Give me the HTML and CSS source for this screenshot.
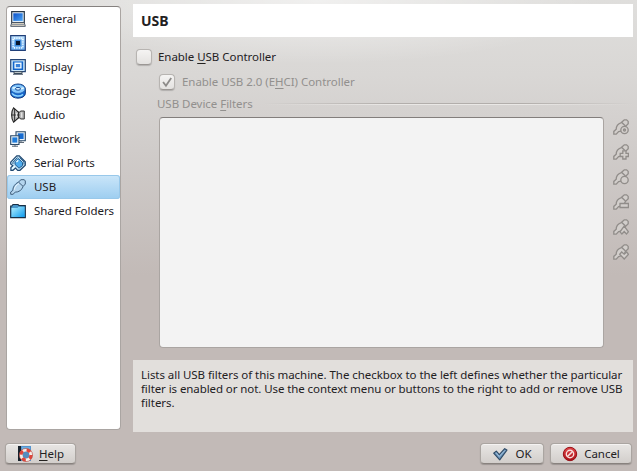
FILE: index.html
```html
<!DOCTYPE html>
<html lang="en">
<head>
<meta charset="utf-8">
<title>Settings - USB</title>
<link rel="stylesheet" href="styles.css">
</head>
<body>
<svg class="defs" aria-hidden="true">
  <defs>
    <linearGradient id="screen" x1="0" y1="0" x2="1" y2="1"><stop offset="0" stop-color="#0b50c8"/><stop offset="1" stop-color="#4ba5f5"/></linearGradient>
    <linearGradient id="pale" x1="0" y1="0" x2="0" y2="1"><stop offset="0" stop-color="#bfe3ff"/><stop offset="1" stop-color="#69adf0"/></linearGradient>
    <linearGradient id="folder" x1="0" y1="0" x2="1" y2="1"><stop offset="0" stop-color="#b4f0ff"/><stop offset="1" stop-color="#0c9bee"/></linearGradient>
    <linearGradient id="red" x1="0" y1="0" x2="0" y2="1"><stop offset="0" stop-color="#e2474a"/><stop offset="1" stop-color="#a90f16"/></linearGradient>
    <g id="plug">
      <path d="M.7 15.3V13L2.8 11.4C2.8 8 5 4.6 8.3 3.2L11 .7H14.3L15.3 2V5L13.2 7.4C12 11 8.8 13.2 5.2 13.2L3 15.3Z"/>
      <path d="M8.6 3.2L13 7.3" fill="none"/>
    </g>
    <g id="plug-small">
      <path d="M.8 15.2V12.4L3.2 10.2C3.2 7.2 5.5 4.6 8.3 3.6L11.3.8H13.6L15.2 2.4V4.7L12.6 7.3C11.4 10.3 8.7 12.3 5.6 12.6L3.2 15.2Z"/>
      <path d="M8.8 3.5L12.5 7" fill="none"/>
    </g>
  </defs>
</svg>
<div class="window">
  <div class="content">
    <nav class="sidebar">
      <a class="item"><svg class="icon" viewBox="0 0 16 16"><path d="M1.7.7h12.6v11H1.7z" fill="#e0edf9" stroke="#293847" stroke-width="1.2"/><path d="M3.3 2.3h9.4v7.6H3.3z" fill="url(#screen)"/><path d="M1.7 11.7h12.6l1 3.6H.7z" fill="#f3ead2" stroke="#465365"/><path d="M2 13.6h12" stroke="#89919d"/></svg><span>General</span></a>
      <a class="item"><svg class="icon" viewBox="0 0 16 16"><path d="M.7.7h14.6v14.6H.7z" fill="url(#pale)" stroke="#203f78" stroke-width="1.2"/><path d="M4 3.2h8.5M4 12.8h8.5M3.2 4v8.5M12.8 4v8.5" stroke="#f0faff" stroke-width="1.8" stroke-dasharray="1 1.4"/><path d="M4.7 4.7h6.6v6.6H4.7z" fill="#3b86d6"/><path d="M6 6h4v4H6z" fill="#07152b"/></svg><span>System</span></a>
      <a class="item"><svg class="icon" viewBox="0 0 16 16"><path d="M.7.7h14.6v11.9H.7z" fill="#cbe8fc" stroke="#264574" stroke-width="1.2"/><path d="M2.8 2.4h10.4v8.6H2.8z" fill="#1265cb"/><path d="M5.1 4.2h5.8v4.7H5.1z" fill="#3981d9" stroke="#f0faff" stroke-width="1.4"/><path d="M4 12.7h8v1.8H4z" fill="#dce0de" stroke="#39495a"/><path d="M3 15.3h10" stroke="#536070"/></svg><span>Display</span></a>
      <a class="item"><svg class="icon" viewBox="0 0 16 16"><path d="M.6 6.2C.6-.7 15.4-.7 15.4 6.2v4c0 6.6-14.8 6.6-14.8 0z" fill="#1767cd" stroke="#173c7c"/><ellipse cx="8" cy="5.9" rx="7" ry="4.5" fill="#86c8fc" stroke="#2866b2" stroke-width=".7"/><path d="M2.5 5L7 4.9M9 6.3l4.7-1.3" stroke="#e6faff" stroke-width="1.6"/><ellipse cx="8" cy="5.8" rx="2.6" ry="1.4" fill="#d9f1ff" stroke="#194f9b"/><path d="M2 10.4c2 3 8 3.7 11 1" fill="none" stroke="#8cd5ff" stroke-width="1.5"/></svg><span>Storage</span></a>
      <a class="item"><svg class="icon" viewBox="0 0 16 16"><path d="M6.7 5.2h3L10.5 4h3.8v8h-3.8l-.8-1.2h-3z" fill="#b5b5b5" stroke="#373737"/><path d="M3.6.8L8.6 5.3v5.4l-5 4.5C1 11.5 1 4.5 3.6.8z" fill="#bcbcbc" stroke="#242424" stroke-width="1.1"/><path d="M1.5 8h8M4.6 2v12" stroke="#333"/><path d="M6.4 6v4M11.7 5.5v5" stroke="#eee"/></svg><span>Audio</span></a>
      <a class="item"><svg class="icon" viewBox="0 0 16 16"><path d="M6 .7h9.3v9H6z" fill="#e9f3fa" stroke="#294765" stroke-width="1.1"/><path d="M7.8 2.3h5.8v5.7H7.8z" fill="#166bd0"/><path d="M9 11.5h5M11 10v2" stroke="#5f6b78"/><path d="M.7 4.7H9v8.8H.7z" fill="#e9f3fa" stroke="#294765" stroke-width="1.1"/><path d="M2.3 6.4h5v5.2h-5z" fill="#1f7cda"/><path d="M2 15.2h6M5 13.5v2" stroke="#526270"/></svg><span>Network</span></a>
      <a class="item"><svg class="icon" viewBox="0 0 16 16"><path d="M.7 7.2L6.8.8H9.3l6 6v3.4L10 15.3H7.7L5.5 13 3 15.3H.9V12.6L2.8 10.7.7 9z" fill="#c2e3f5" stroke="#204870" stroke-width="1.2"/><path d="M8.3 3.4l4.2 4.2v3L9 13.2 5 9.4V6.7z" fill="#4dacee" stroke="#245e91"/><path d="M2.9 9L3 7.2 7.5 2.5M9.5 2.5L14 7v2.5" fill="none" stroke="#2c608e"/><path d="M8.3 5.2L6.4 7.1M2.2 13.8l2.6-2.6" stroke="#f0ffff" stroke-width="1.3"/></svg><span>Serial Ports</span></a>
      <a class="item selected"><svg class="icon" viewBox="0 0 16 16"><use href="#plug" fill="#b4d5ee" stroke="#405f7d"/><path d="M4.3 10.8C4.8 7.8 6.5 5.7 9 4.6" fill="none" stroke="#edf8ff"/></svg><span>USB</span></a>
      <a class="item"><svg class="icon" viewBox="0 0 16 16"><path d="M.7 14.7V3h1.1L3 1.5h5l1.2 1.2h6.1v12z" fill="#4996c9" stroke="#172f46" stroke-width="1.2"/><path d="M1.5 5h6l1.3-1.3h5.8v10.4H1.5z" fill="url(#folder)"/></svg><span>Shared Folders</span></a>
    </nav>
    <main class="page">
      <h1 class="title">USB</h1>
      <section class="settings">
        <div class="option"><i class="box"></i><span>Enable <u>U</u>SB Controller</span></div>
        <div class="option nested"><i class="box"><svg viewBox="0 0 16 16"><path d="M3.5 8l3.3 4.3 6-9" fill="none" stroke="#8d8b89" stroke-width="2.1"/></svg></i><span>Enable USB 2.0 (E<u>H</u>CI) Controller</span></div>
        <div class="group-title"><span>USB Device <u>F</u>ilters</span><i class="rule"></i></div>
        <div class="filters">
          <div class="filter-list"></div>
          <div class="tools">
            <svg viewBox="0 0 16 16"><use href="#plug-small"/><circle cx="11.5" cy="11" r="3.7"/><circle cx="11.5" cy="11" r="1"/></svg>
            <svg viewBox="0 0 16 16"><use href="#plug-small"/><path d="M9.8 6.8h3.2v2.5h2.4v3.2H13V15H9.8v-2.5H7.2V9.3h2.6z"/></svg>
            <svg viewBox="0 0 16 16"><use href="#plug-small"/><circle cx="11.5" cy="11" r="3.7"/></svg>
            <svg viewBox="0 0 16 16"><use href="#plug-small"/><path d="M7 9.5h8.4v4H7z"/></svg>
            <svg viewBox="0 0 16 16"><use href="#plug-small"/><path d="M11.2 7.2l4.2 5.6-1.9 2.2-2.3-2.5L8.9 15 7 12.8z"/></svg>
            <svg viewBox="0 0 16 16"><use href="#plug-small"/><path d="M11.2 15L6.7 10.3l2-2.3 2.5 2.2L13.7 8l1.8 2.3z"/></svg>
          </div>
        </div>
      </section>
      <p class="description"><span class="line one">Lists all USB filters of this machine. The checkbox to the left defines whether the particular</span><span class="line two">filter is enabled or not. Use the context menu or buttons to the right to add or remove USB</span><span class="line">filters.</span></p>
    </main>
  </div>
  <footer class="actions">
    <button class="button help"><svg class="icon" viewBox="0 0 16 16"><path d="M1 0h13v15H1z" fill="#5594cf"/><path d="M1 0h3v15H1z" fill="#17212b"/><path d="M5 2h8" stroke="#85c7ef"/><circle cx="9" cy="9" r="5" fill="#568dbe" stroke="#f5eee9" stroke-width="3.2"/><circle cx="9" cy="9" r="5" fill="none" stroke="#df463b" stroke-width="3.2" stroke-dasharray="3.93 3.93"/><circle cx="9" cy="9" r="6.6" fill="none" stroke="#b8473d" stroke-width=".6"/></svg><span><u>H</u>elp</span></button>
    <button class="button ok"><svg class="icon" viewBox="0 0 16 16"><path d="M1.7 7.2l2.6-2 3 3.5 5.4-6 2.2 1.4-7.2 9.7z" fill="#6f98be" stroke="#304c68" stroke-width="1.2" stroke-linejoin="round"/><path d="M4 6.5l3.2 4 5.7-6" fill="none" stroke="#a5c5df"/></svg><span>OK</span></button>
    <button class="button cancel"><svg class="icon" viewBox="0 0 16 16"><circle cx="8" cy="8" r="6.7" fill="url(#red)" stroke="#981117"/><circle cx="8" cy="8" r="3.7" fill="none" stroke="#f7dedc" stroke-width="1.4"/><path d="M5.2 10.8l5.6-5.6" stroke="#f7dedc" stroke-width="1.6"/></svg><span>Cancel</span></button>
  </footer>
</div>
</body>
</html>
```
FILE: styles.css
```css
* { box-sizing: border-box; }
body {
  margin: 0;
  font: 11.5px/14px "Noto Sans", "Open Sans", sans-serif;
  letter-spacing: -.04px;
  color: #23211f;
}
.defs { display: block; width: 0; height: 0; }
.window {
  width: 637px;
  height: 471px;
  display: flex;
  flex-direction: column;
  padding: 4px 4px 7px 6px;
  background:
    radial-gradient(ellipse 280px 64px at 50% 0, rgba(255,255,255,.55), rgba(255,255,255,0)),
    linear-gradient(#dfdedc 0, #d9d7d5 75px, #d0ccca 150px, #c2bab7 275px);
}
.content { height: 428px; display: flex; gap: 12px; }
.sidebar {
  width: 115px;
  height: 424px;
  margin-top: 2px;
  padding-top: 1px;
  border: 1px solid #aaa5a2;
  border-top-color: #85817f;
  border-radius: 4px;
  background: #fff;
}
.item {
  height: 24px;
  display: flex;
  align-items: center;
  gap: 8px;
  padding-left: 3px;
  white-space: nowrap;
}
.item:first-child { margin-top: -1px; }
.item.selected {
  border-radius: 3px;
  background: linear-gradient(#cbe6f9, #9ccdf0);
  box-shadow: inset 0 0 0 1px #98c8ea;
}
.icon { width: 16px; height: 16px; flex: none; }
.page { width: 500px; display: flex; flex-direction: column; }
.title {
  height: 33px;
  margin: 0;
  padding: 1px 8px;
  background: #fff;
  font-size: 14px;
  line-height: 32px;
  font-weight: 700;
}
.settings { height: 323px; padding: 12px 0 0 3px; }
.option { height: 16px; display: flex; align-items: center; gap: 6px; white-space: nowrap; }
.option.nested { margin: 9px 0 0 24px; color: #92908e; }
.box {
  width: 16px;
  height: 16px;
  flex: none;
  border: 1px solid #b7b4b1;
  border-bottom-color: #9b9794;
  border-radius: 4px;
  background: linear-gradient(#f5f4f3, #e4e2e0);
  box-shadow: 0 1px 1px rgba(0,0,0,.18);
}
.box svg { display: block; width: 14px; height: 14px; }
.nested .box { margin-left: -1px; margin-right: 1px; }
u { text-underline-offset: 2px; text-decoration-thickness: 1px; text-decoration-skip-ink: none; }
.group-title {
  height: 14px;
  margin: 7px 0 0 21px;
  display: flex;
  align-items: center;
  gap: 10px;
  color: #92908e;
  white-space: nowrap;
}
.rule {
  flex: 1;
  height: 2px;
  background:
    linear-gradient(90deg, transparent, #b2aeab 35%, #b2aeab 70%, transparent) 0 0 / 100% 1px no-repeat,
    linear-gradient(90deg, transparent, #eae8e6 35%, #eae8e6 70%, transparent) 0 1px / 100% 1px no-repeat;
}
.filters { display: flex; gap: 9px; margin: 6px 0 0 23px; }
.filter-list {
  width: 445px;
  height: 231px;
  border: 1px solid #aaa5a2;
  border-top-color: #827e7c;
  border-radius: 4px;
  background: #f3f3f3;
}
.tools { display: flex; flex-direction: column; gap: 9px; padding-top: 2px; }
.tools svg { width: 16px; height: 16px; fill: #d2cecb; stroke: #918d8a; stroke-width: 1.3; }
.description {
  height: 72px;
  margin: 0;
  padding: 8px;
  background: #e2dfdc;
}
.line { display: block; white-space: nowrap; }
.one { letter-spacing: -.053px; }
.two { letter-spacing: -.085px; }
.actions { height: 21px; margin: 11px 1px 0 -1px; display: flex; gap: 6px; }
.button {
  height: 21px;
  display: flex;
  align-items: center;
  justify-content: center;
  gap: 7px;
  padding: 0;
  border: 1px solid #aaa5a1;
  border-bottom-color: #88827e;
  border-radius: 4px;
  background: linear-gradient(#e8e6e4, #d2cecb);
  box-shadow: inset 0 1px #f5f3f2, 0 1px 1px rgba(0,0,0,.2);
  color: inherit;
  font: inherit;
  letter-spacing: inherit;
}
.help { width: 71px; margin-right: auto; }
.help, .cancel { gap: 6px; }
.ok { width: 64px; }
.cancel { width: 82px; }
```
